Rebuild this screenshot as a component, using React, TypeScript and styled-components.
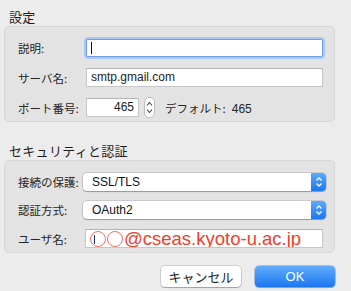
import React from "react";
import styled, { createGlobalStyle } from "styled-components";

const latin = `"Liberation Sans", "Noto Sans CJK JP", sans-serif`;
const cjk = `"Noto Sans CJK JP", "Liberation Sans", sans-serif`;

const GlobalStyle = createGlobalStyle`
  html, body {
    margin: 0;
    padding: 0;
    background: #ececec;
  }
  body {
    width: 351px;
    height: 291px;
    overflow: hidden;
    font-family: ${cjk};
    color: #1e1e1e;
  }
`;

const Window = styled.div`
  padding: 7px 16px 0 4px;
`;

const SectionTitle = styled.div<{ $gap?: number }>`
  font-size: 13px;
  line-height: 19px;
  height: 19px;
  padding-left: 5px;
  margin-top: ${(p) => p.$gap ?? 0}px;
  letter-spacing: 0.3px;
`;

const GroupBox = styled.div<{ $pb: number }>`
  background: #e3e3e3;
  border: 1px solid #d6d6d6;
  border-radius: 5px;
  padding: 12px 0 ${(p) => p.$pb}px 13px;
  display: flex;
  flex-direction: column;
  gap: ${(p) => (p.$pb === 6 ? 11 : 10)}px;
`;

const FormRow = styled.div<{ $label: number }>`
  display: grid;
  grid-template-columns: ${(p) => p.$label}px 1fr;
  align-items: center;
  height: 18px;
`;

const Label = styled.div`
  font-size: 11.5px;
  line-height: 18px;
  white-space: nowrap;
  color: #262626;
`;

const TextField = styled.div<{ $focus?: boolean; $width?: number; $right?: number; $shift?: number }>`
  position: relative;
  box-sizing: border-box;
  height: ${(p) => (p.$focus ? 18 : 19)}px;
  width: ${(p) => (p.$width ? `${p.$width}px` : "auto")};
  margin-right: ${(p) => p.$right ?? 11}px;
  margin-left: ${(p) => p.$shift ?? 0}px;
  background: #fff;
  border: 1px solid ${(p) => (p.$focus ? "#6f9fe0" : "#c6c6c6")};
  border-top-color: ${(p) => (p.$focus ? "#6f9fe0" : "#b4b4b4")};
  box-shadow: ${(p) => (p.$focus ? "0 0 0 2px #a9c9f4" : "none")};
  border-radius: ${(p) => (p.$focus ? 2 : 0)}px;
  font-family: ${latin};
  font-size: 12px;
  line-height: 17px;
  padding: 0 4px;
  display: flex;
  align-items: center;
  overflow: hidden;
  white-space: nowrap;
`;

const NumberText = styled.span`
  margin-left: auto;
`;

const Caret = styled.span<{ $h: number; $color: string }>`
  display: inline-block;
  width: 1px;
  height: ${(p) => p.$h}px;
  background: ${(p) => p.$color};
`;

const PortLine = styled.div`
  display: flex;
  align-items: center;
`;

const Stepper = styled.div`
  box-sizing: border-box;
  width: 11px;
  height: 21px;
  margin-left: 5px;
  background: #fff;
  border: 1px solid #bdbdbd;
  border-radius: 5px;
  display: flex;
  align-items: center;
  justify-content: center;
`;

const DefaultText = styled.span`
  margin-left: 10px;
  font-size: 11.5px;
  color: #262626;
  white-space: nowrap;
`;

const DefaultNum = styled.span`
  font-family: ${latin};
  font-size: 12px;
  margin-left: 6px;
`;

const Popup = styled.div`
  box-sizing: border-box;
  height: 18px;
  margin-right: 8px;
  background: #fff;
  border-radius: 4px;
  box-shadow: 0 0 0 0.5px rgba(0, 0, 0, 0.22), 0 1px 1px rgba(0, 0, 0, 0.25);
  display: flex;
  align-items: center;
  font-family: ${latin};
  font-size: 12px;
  color: #111;
  overflow: hidden;
`;

const PopupText = styled.span`
  flex: 1;
  padding-left: 9px;
`;

const PopupArrows = styled.div`
  width: 15px;
  height: 100%;
  background: linear-gradient(#5caafd, #1b78f2);
  display: flex;
  align-items: center;
  justify-content: center;
`;

const RedValue = styled.span`
  color: #f0402a;
  font-family: ${latin};
  font-size: 18.5px;
  line-height: 19px;
  display: flex;
  align-items: center;
`;

const Circle = styled.span`
  position: relative;
  display: inline-block;
  box-sizing: border-box;
  width: 16px;
  height: 16px;
  margin-right: 1px;
  border: 1px solid #f07060;
  border-radius: 50%;
`;

const CircleCaret = styled.span`
  position: absolute;
  left: 3px;
  top: 3px;
  width: 1px;
  height: 9px;
  background: #1a2a6a;
`;

const ButtonBar = styled.div`
  display: flex;
  justify-content: flex-end;
  gap: 14px;
  margin-top: 13px;
`;

const Button = styled.div<{ $primary?: boolean }>`
  box-sizing: border-box;
  width: 80px;
  height: 21px;
  border-radius: 4px;
  display: flex;
  align-items: center;
  justify-content: center;
  font-size: 13px;
  background: ${(p) => (p.$primary ? "linear-gradient(#62aefc, #1b76f1)" : "#fff")};
  color: ${(p) => (p.$primary ? "#fff" : "#1e1e1e")};
  box-shadow: ${(p) =>
    p.$primary
      ? "0 0 0 0.5px rgba(20, 90, 200, 0.6), 0 1px 1px rgba(0, 0, 0, 0.2)"
      : "0 0 0 0.5px rgba(0, 0, 0, 0.25), 0 1px 1px rgba(0, 0, 0, 0.22)"};
  font-family: ${(p) => (p.$primary ? latin : cjk)};
`;

const StepperIcon = () => (
  <svg width="7" height="15" viewBox="0 0 7 15">
    <path d="M1 5.5 L3.5 2.5 L6 5.5" fill="none" stroke="#444" strokeWidth="1.1" />
    <path d="M1 9.5 L3.5 12.5 L6 9.5" fill="none" stroke="#444" strokeWidth="1.1" />
  </svg>
);

const PopupIcon = () => (
  <svg width="8" height="12" viewBox="0 0 8 12">
    <path d="M1.5 4.5 L4 2 L6.5 4.5" fill="none" stroke="#fff" strokeWidth="1.3" />
    <path d="M1.5 7.5 L4 10 L6.5 7.5" fill="none" stroke="#fff" strokeWidth="1.3" />
  </svg>
);

export default function App() {
  return (
    <>
      <GlobalStyle />
      <Window>
        <SectionTitle>設定</SectionTitle>
        <GroupBox $pb={6}>
          <FormRow $label={68}>
            <Label>説明:</Label>
            <TextField $focus>
              <Caret $h={12} $color="#111" />
            </TextField>
          </FormRow>
          <FormRow $label={68}>
            <Label>サーバ名:</Label>
            <TextField>smtp.gmail.com</TextField>
          </FormRow>
          <FormRow $label={68}>
            <Label>ポート番号:</Label>
            <PortLine>
              <TextField $width={53} $right={0}>
                <NumberText>465</NumberText>
              </TextField>
              <Stepper>
                <StepperIcon />
              </Stepper>
              <DefaultText>
                デフォルト:<DefaultNum>465</DefaultNum>
              </DefaultText>
            </PortLine>
          </FormRow>
        </GroupBox>

        <SectionTitle $gap={19}>セキュリティと認証</SectionTitle>
        <GroupBox $pb={5}>
          <FormRow $label={65}>
            <Label>接続の保護:</Label>
            <Popup>
              <PopupText>SSL/TLS</PopupText>
              <PopupArrows>
                <PopupIcon />
              </PopupArrows>
            </Popup>
          </FormRow>
          <FormRow $label={65}>
            <Label>認証方式:</Label>
            <Popup>
              <PopupText>OAuth2</PopupText>
              <PopupArrows>
                <PopupIcon />
              </PopupArrows>
            </Popup>
          </FormRow>
          <FormRow $label={65}>
            <Label>ユーザ名:</Label>
            <TextField $shift={2}>
              <RedValue>
                <Circle>
                  <CircleCaret />
                </Circle>
                <Circle />
                @cseas.kyoto-u.ac.jp
              </RedValue>
            </TextField>
          </FormRow>
        </GroupBox>

        <ButtonBar>
          <Button>キャンセル</Button>
          <Button $primary>OK</Button>
        </ButtonBar>
      </Window>
    </>
  );
}
